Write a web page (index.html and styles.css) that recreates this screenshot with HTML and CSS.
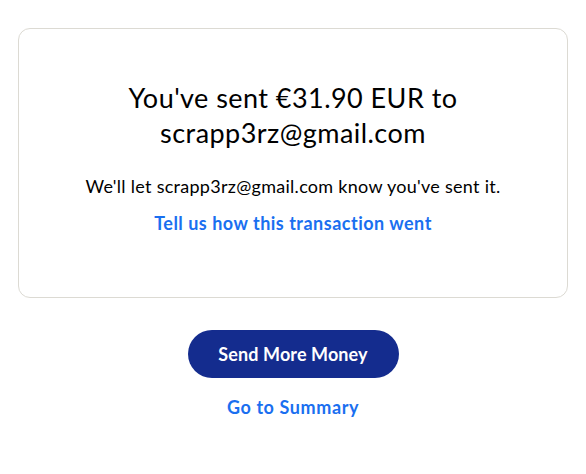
FILE: index.html
```html
<!DOCTYPE html>
<html lang="en">
<head>
<meta charset="utf-8">
<title>Sent</title>
<link rel="stylesheet" href="styles.css">
</head>
<body>
<main class="page">
  <section class="card">
    <h1 class="title">You've sent €31.90 EUR to<br>scrapp3rz@gmail.com</h1>
    <p class="note">We'll let scrapp3rz@gmail.com know you've sent it.</p>
    <a class="link feedback" href="#">Tell us how this transaction went</a>
  </section>
  <div class="actions">
    <button class="btn-primary" type="button">Send More Money</button>
    <a class="link summary" href="#">Go to Summary</a>
  </div>
</main>
</body>
</html>
```
FILE: styles.css
```css
* { box-sizing: border-box; }
html, body { margin: 0; padding: 0; background: #fff; }
body {
  font-family: Lato, "Open Sans", "Liberation Sans", sans-serif;
  color: #001435;
}
.page {
  width: 586px;
  padding: 28px 18px 0 18px;
}
.card {
  height: 270px;
  border: 1px solid #dcdad3;
  border-radius: 12px;
  display: flex;
  flex-direction: column;
  align-items: center;
  padding-top: 51px;
}
.title {
  margin: 0;
  font-size: 27px;
  line-height: 35px;
  letter-spacing: 0.45px;
  font-weight: 400;
  text-align: center;
  color: #000;
}
.note {
  margin: 25px 0 0 0;
  font-size: 18px;
  line-height: 22px;
  letter-spacing: 0.28px;
  color: #000;
}
.link {
  color: #1a6ff0;
  font-weight: 700;
  text-decoration: none;
  font-size: 18px;
  line-height: 22px;
  letter-spacing: 0.5px;
}
.feedback { margin-top: 15px; }
.actions {
  display: flex;
  flex-direction: column;
  align-items: center;
  padding-top: 32px;
}
.btn-primary {
  width: 211px;
  height: 48px;
  border: none;
  border-radius: 24px;
  background: #142c8e;
  color: #fff;
  font-family: inherit;
  font-weight: 700;
  font-size: 18px;
  letter-spacing: 0.1px;
}
.summary { margin-top: 18px; letter-spacing: 0.6px; }
```
